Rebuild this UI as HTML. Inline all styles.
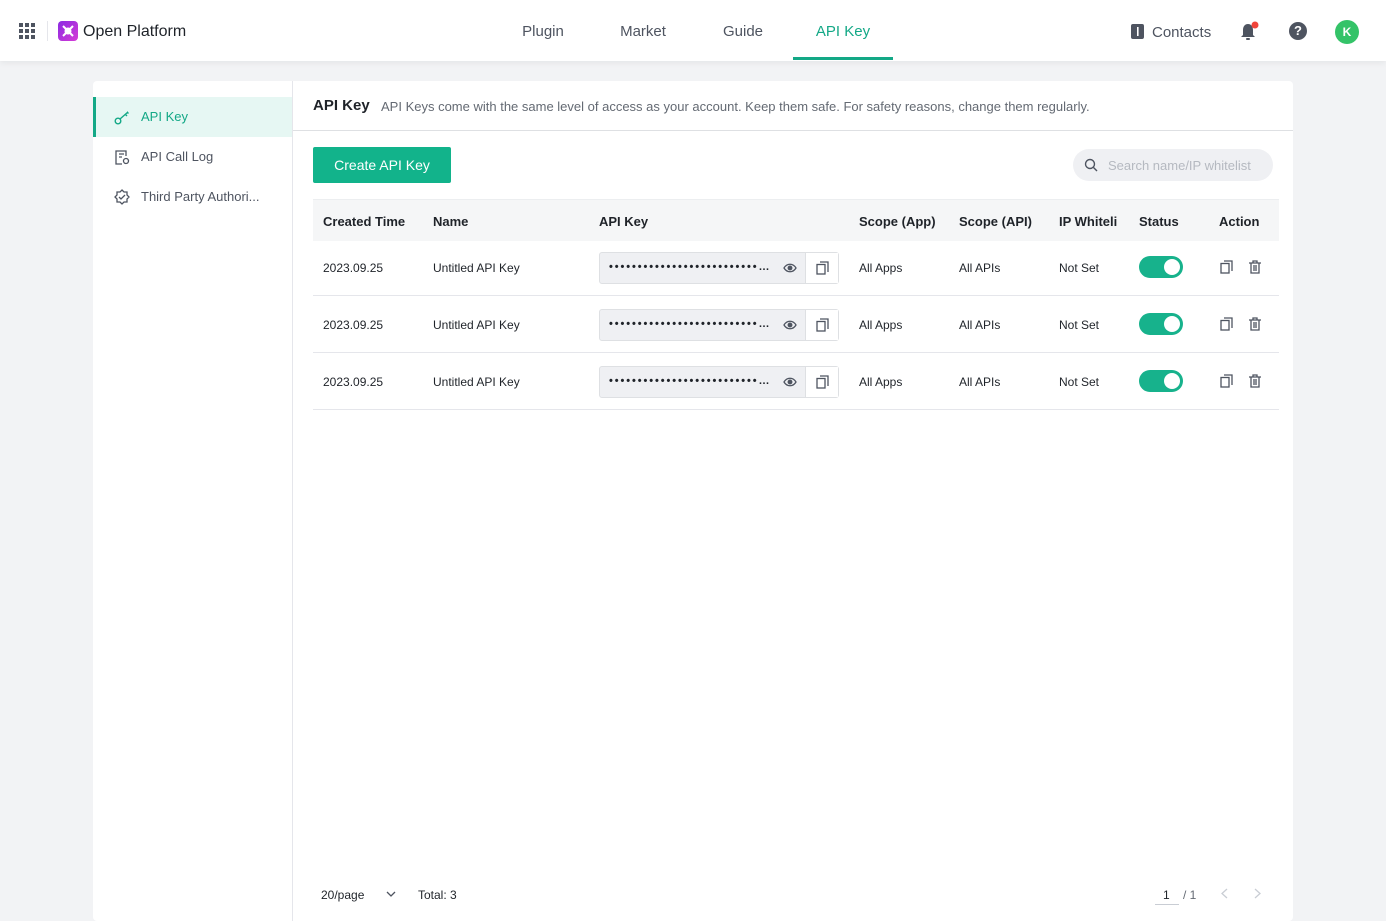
<!DOCTYPE html>
<html><head><meta charset="utf-8"><style>
*{box-sizing:border-box;margin:0;padding:0}
body{width:1386px;height:913px;overflow:hidden;background:#f2f3f5;font-family:"Liberation Sans",sans-serif;color:#1f2329;position:relative}
.hdr{position:absolute;left:0;top:0;width:1386px;height:61px;background:#fff;box-shadow:0 2px 6px rgba(0,0,0,.06)}
.a{position:absolute}
.tab{position:absolute;top:23px;font-size:15px;color:#4e5460;width:100px;text-align:center}
.card{position:absolute;left:93px;top:81px;width:1200px;height:840px;background:#fff;border-radius:4px}
.side{position:absolute;left:93px;top:81px;width:200px;height:840px;border-right:1px solid #e5e6eb}
.mi{position:absolute;left:0;width:199px;height:40px;font-size:13px;color:#4e5460;padding-left:48px;line-height:40px}
.th{position:absolute;top:214px;font-size:13px;font-weight:bold;color:#1f2329}
.td{position:absolute;font-size:12px;color:#1f2329}
.key{position:absolute;left:599px;width:240px;height:32px;border:1px solid #dee0e3;border-radius:3px;background:#eff0f3}
.key .cp{position:absolute;right:0;top:0;width:33px;height:30px;background:#fff;border-left:1px solid #dee0e3}
.tg{position:absolute;left:1139px;width:44px;height:22px;border-radius:11px;background:#17b28c}
.tg:after{content:"";position:absolute;right:3px;top:3px;width:16px;height:16px;border-radius:50%;background:#fff}
.line{position:absolute;left:313px;width:966px;height:1px;background:#e5e6eb}
</style></head><body>
<div class="hdr"></div>
<svg class="a" style="left:19px;top:23px" width="16" height="16"><g fill="#4e5460"><rect x="0" y="0" width="4" height="4"/><rect x="6" y="0" width="4" height="4"/><rect x="12" y="0" width="4" height="4"/><rect x="0" y="6" width="4" height="4"/><rect x="6" y="6" width="4" height="4"/><rect x="12" y="6" width="4" height="4"/><rect x="0" y="12" width="4" height="4"/><rect x="6" y="12" width="4" height="4"/><rect x="12" y="12" width="4" height="4"/></g></svg>
<div class="a" style="left:47px;top:21px;width:1px;height:20px;background:#e5e6eb"></div>
<svg class="a" style="left:58px;top:21px" width="20" height="20"><defs><linearGradient id="g" x1="0" y1="0" x2="1" y2="1"><stop offset="0" stop-color="#8a2be2"/><stop offset="1" stop-color="#d63bd6"/></linearGradient></defs><rect width="20" height="20" rx="4" fill="url(#g)"/><path d="M5 5L15 15M15 5L5 15" stroke="#fff" stroke-width="2"/><circle cx="10" cy="10" r="3.5" fill="#fff"/></svg>
<div class="a" style="left:83px;top:23px;font-size:16px;color:#1f2329">Open Platform</div>
<div class="tab" style="left:493px">Plugin</div>
<div class="tab" style="left:593px">Market</div>
<div class="tab" style="left:693px">Guide</div>
<div class="tab" style="left:793px;color:#13a886">API Key</div>
<div class="a" style="left:793px;top:57px;width:100px;height:3px;background:#13a886"></div>
<svg class="a" style="left:1130px;top:24px" width="15" height="15"><rect x="1" y="0" width="13" height="15" rx="2" fill="#4e5460"/><rect x="7" y="3" width="1.6" height="9" fill="#fff"/></svg>
<div class="a" style="left:1152px;top:24px;font-size:15px;color:#4e5460">Contacts</div>
<svg class="a" style="left:1240px;top:21px" width="20" height="22"><path d="M8 3C4.5 3 3 6 3 9v5l-2 2h14l-2-2V9c0-3-1.5-6-5-6z" fill="#4e5460"/><rect x="6" y="17" width="4" height="2" rx="1" fill="#4e5460"/><circle cx="15" cy="4" r="3.5" fill="#f0443a"/></svg>
<div class="a" style="left:1289px;top:22px;width:18px;height:18px;border-radius:50%;background:#4e5460;color:#fff;font-size:13px;font-weight:bold;text-align:center;line-height:18px">?</div>
<div class="a" style="left:1335px;top:20px;width:24px;height:24px;border-radius:50%;background:#34c368;color:#fff;font-size:12px;font-weight:bold;text-align:center;line-height:24px">K</div>

<div class="card"></div>
<div class="side">
<div class="mi" style="top:16px;background:#e6f7f3;color:#13a886;border-left:3px solid #13a886;padding-left:45px">API Key</div>
<div class="mi" style="top:56px">API Call Log</div>
<div class="mi" style="top:96px">Third Party Authori...</div>
</div>
<svg class="a" style="left:114px;top:109px" width="16" height="16" fill="none" stroke="#13a886" stroke-width="1.4"><circle cx="4" cy="12" r="2.8"/><path d="M6 10L14 3M11 5l2 2M13 3l1.5 1.5"/></svg>
<svg class="a" style="left:114px;top:149px" width="16" height="16" fill="none" stroke="#4e5460" stroke-width="1.3"><path d="M12 7V2H2v13h6"/><path d="M5 5h5M5 8h3"/><circle cx="12" cy="12" r="2.5"/></svg>
<svg class="a" style="left:114px;top:189px" width="16" height="16" fill="none" stroke="#4e5460" stroke-width="1.3"><path d="M8 1l2 2h3v3l2 2-2 2v3h-3l-2 2-2-2H3v-3L1 8l2-2V3h3z"/><path d="M5 8l2 2 4-4"/></svg>

<div class="a" style="left:313px;top:97px;font-size:15px;font-weight:bold">API Key</div>
<div class="a" style="left:381px;top:99px;font-size:13px;color:#646a73">API Keys come with the same level of access as your account. Keep them safe. For safety reasons, change them regularly.</div>
<div class="a" style="left:293px;top:130px;width:1000px;height:1px;background:#dee0e3"></div>
<div class="a" style="left:313px;top:147px;width:138px;height:36px;background:#12b38b;border-radius:2px;color:#fff;font-size:14px;text-align:center;line-height:36px">Create API Key</div>
<div class="a" style="left:1073px;top:149px;width:200px;height:32px;background:#eff0f3;border-radius:16px"></div>
<svg class="a" style="left:1084px;top:158px" width="14" height="14" fill="none" stroke="#4e5460" stroke-width="1.4"><circle cx="6" cy="6" r="4.5"/><path d="M9.5 9.5L13 13"/></svg>
<div class="a" style="left:1108px;top:158px;font-size:13px;color:#b5b9c0">Search name/IP whitelist</div>

<div class="a" style="left:313px;top:199px;width:966px;height:42px;background:#f5f6f7;border-top:1px solid #eceef0"></div>
<div class="th" style="left:323px">Created Time</div>
<div class="th" style="left:433px">Name</div>
<div class="th" style="left:599px">API Key</div>
<div class="th" style="left:859px">Scope (App)</div>
<div class="th" style="left:959px">Scope (API)</div>
<div class="th" style="left:1059px">IP Whiteli</div>
<div class="th" style="left:1139px">Status</div>
<div class="th" style="left:1219px">Action</div>

<div id="rows"></div>
<script>
var h='';[252,309,366].forEach(function(y,i){
var t=y+9;
h+='<div class="td" style="left:323px;top:'+t+'px">2023.09.25</div><div class="td" style="left:433px;top:'+t+'px">Untitled API Key</div>'+
'<div class="key" style="top:'+y+'px"><span style="position:absolute;left:9px;top:8px;font-size:11px;font-weight:bold;letter-spacing:1.9px;white-space:nowrap">••••••••••••••••••••••••••…</span>'+
'<svg style="position:absolute;left:183px;top:9px" width="14" height="12" fill="none" stroke="#4e5460" stroke-width="1.3"><path d="M1 6c3-5 9-5 12 0-3 5-9 5-12 0z"/><circle cx="7" cy="6" r="1.8" fill="#4e5460"/></svg>'+
'<div class="cp"><svg style="position:absolute;left:10px;top:8px" width="13" height="14" fill="none" stroke="#4e5460" stroke-width="1.3"><path d="M4 1h8v10"/><rect x="1" y="3.5" width="8" height="9.5"/></svg></div></div>'+
'<div class="td" style="left:859px;top:'+t+'px">All Apps</div><div class="td" style="left:959px;top:'+t+'px">All APIs</div><div class="td" style="left:1059px;top:'+t+'px">Not Set</div>'+
'<div class="tg" style="top:'+(y+4)+'px"></div>'+
'<svg class="a" style="left:1220px;top:'+(y+8)+'px" width="13" height="14" fill="none" stroke="#4e5460" stroke-width="1.3"><path d="M4 1h8v10"/><rect x="1" y="3.5" width="8" height="9.5"/></svg>'+
'<svg class="a" style="left:1249px;top:'+(y+8)+'px" width="12" height="14" fill="none" stroke="#4e5460" stroke-width="1.3"><path d="M0 3h12M4 3V1h4v2M2 3v10h8V3M5 5v6M7 5v6"/></svg>'+
'<div class="line" style="top:'+(y+43)+'px"></div>';
});document.getElementById('rows').innerHTML=h;
</script>
<div class="a" style="left:321px;top:888px;font-size:12px;color:#1f2329">20/page</div>
<svg class="a" style="left:386px;top:891px" width="10" height="7" fill="none" stroke="#4e5460" stroke-width="1.3"><path d="M1 1l4 4 4-4"/></svg>
<div class="a" style="left:418px;top:888px;font-size:12px;color:#1f2329">Total: 3</div>
<div class="a" style="left:1163px;top:888px;font-size:12px;color:#1f2329">1</div>
<div class="a" style="left:1155px;top:904px;width:24px;height:1px;background:#c9cdd4"></div>
<div class="a" style="left:1183px;top:888px;font-size:12px;color:#646a73">/ 1</div>
<svg class="a" style="left:1221px;top:888px" width="7" height="11" fill="none" stroke="#c9cdd4" stroke-width="1.3"><path d="M6 1L1 5.5 6 10"/></svg>
<svg class="a" style="left:1254px;top:888px" width="7" height="11" fill="none" stroke="#c9cdd4" stroke-width="1.3"><path d="M1 1l5 4.5L1 10"/></svg>
</body></html>
